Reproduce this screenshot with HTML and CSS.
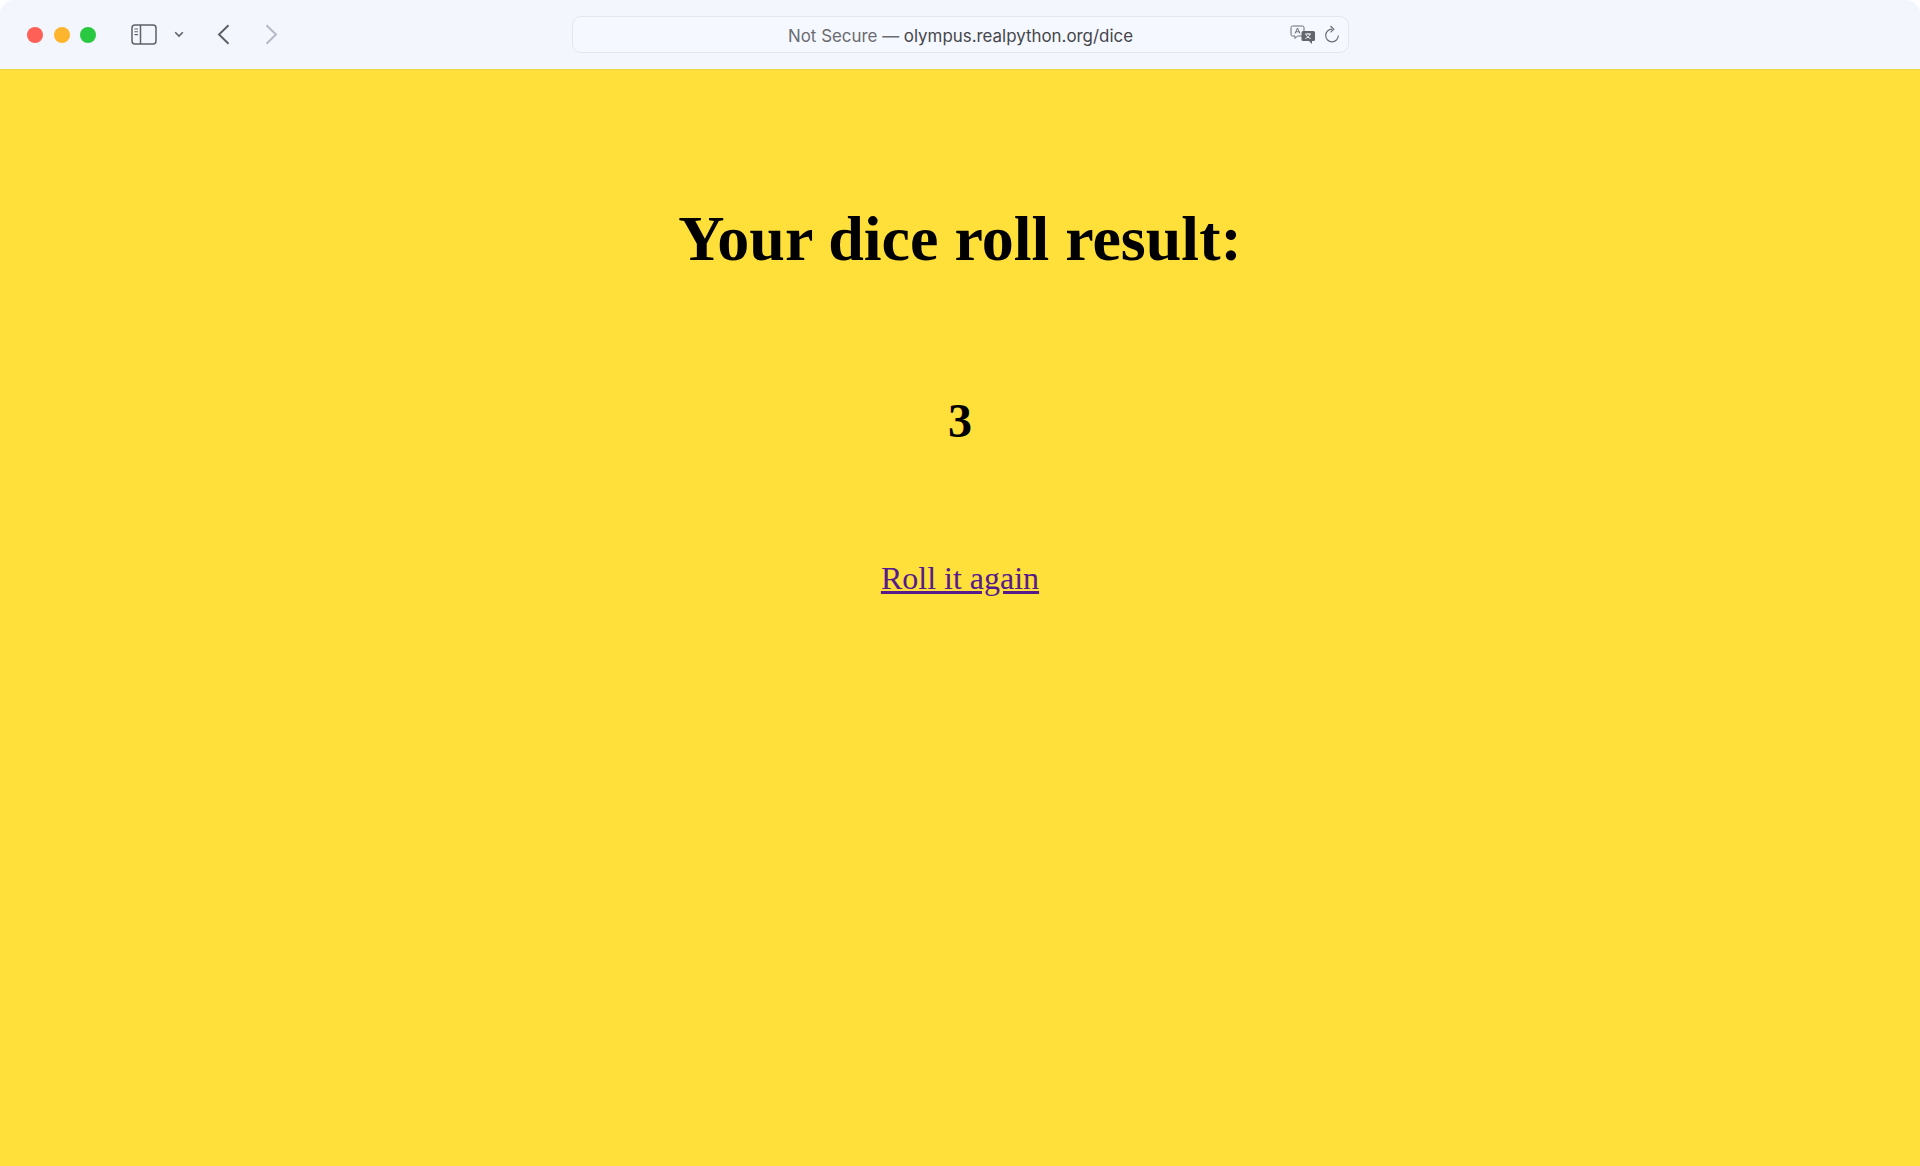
FILE: index.html
```html
<!DOCTYPE html>
<html lang="en">
<head>
<meta charset="utf-8">
<title>Dice roll</title>
<link rel="stylesheet" href="styles.css">
</head>
<body>
<header class="toolbar">
  <div class="lights">
    <span class="light red"></span>
    <span class="light amber"></span>
    <span class="light green"></span>
  </div>
  <svg class="sidebar-icon" width="26" height="21" viewBox="0 0 26 21" fill="none" stroke="#5f6269">
    <rect x="1" y="1" width="24" height="19" rx="3" stroke-width="1.5"/>
    <path d="M9.5 1v19" stroke-width="1.5"/>
    <path d="M3.5 5h3.5M3.5 7.8h3.5M3.5 10.6h3.5" stroke-width="1.1"/>
  </svg>
  <svg class="chevron" width="10" height="7" viewBox="0 0 10 7" fill="none" stroke="#5f6269" stroke-width="1.6">
    <path d="M1.2 1.2 5 5l3.8-3.8"/>
  </svg>
  <svg class="back" width="13" height="21" viewBox="0 0 13 21" fill="none" stroke="#5a5d64" stroke-width="1.9">
    <path d="M11.5 1.2 2 10.5l9.5 9.3"/>
  </svg>
  <svg class="forward" width="13" height="21" viewBox="0 0 13 21" fill="none" stroke="#b4b8c4" stroke-width="1.9">
    <path d="M1.5 1.2 11 10.5l-9.5 9.3"/>
  </svg>
  <div class="address">
    <span class="url"><span class="insecure">Not Secure — </span>olympus.realpython.org/dice</span>
    <svg class="translate" width="26" height="20" viewBox="0 0 26 20">
      <path d="M2.5 1h10a1.5 1.5 0 0 1 1.5 1.500v7a1.500 1.500 0 0 1-1.500 1.500H7.500l-2.500 2.500v-2.500H2.500A1.500 1.500 0 0 1 1 9.500v-7A1.500 1.500 0 0 1 2.500 1z" fill="#f4f7fd" stroke="#6a6d74" stroke-width="1"/>
      <path d="M5 8.500 7.500 3l2.500 5.500M6 6.800h3" fill="none" stroke="#6a6d74" stroke-width="1"/>
      <path d="M13 6h10.500A1.500 1.500 0 0 1 25 7.500v7a1.500 1.500 0 0 1-1.500 1.500H22v3l-3-3h-6a1.500 1.500 0 0 1-1.500-1.500v-7A1.500 1.500 0 0 1 13 6z" fill="#63666d"/>
      <path d="M15 9h6M18 8v1.200M20 9c-.5 2-2.500 3.700-4.500 4.500M16 9.800c.7 1.700 2.500 3 4.700 3.700" fill="none" stroke="#f4f7fd" stroke-width="1"/>
    </svg>
    <svg class="reload" width="16" height="19" viewBox="0 0 16 19" fill="none" stroke="#6a6d74" stroke-width="1.2">
      <path d="M8 4.200a6.300 6.300 0 1 0 6.300 6.300"/>
      <path d="M6.500 1 9.800 4.200 6.500 7.400"/>
    </svg>
  </div>
</header>
<main class="page">
  <h1 class="title">Your dice roll result:</h1>
  <h2 class="result">3</h2>
  <p class="again"><a class="again-link" href="#">Roll it again</a></p>
</main>
</body>
</html>
```
FILE: styles.css
```css
html, body {
  margin: 0;
  height: 100%;
  background: #ffffff;
}
body {
  display: flex;
  flex-direction: column;
  height: 1166px;
  overflow: hidden;
}
.toolbar {
  height: 69px;
  flex: none;
  display: flex;
  align-items: center;
  background: #f3f6fc;
  border-radius: 14px 14px 0 0;
  padding-left: 27px;
  box-sizing: border-box;
}
.lights {
  display: flex;
  gap: 10.500px;
}
.light {
  width: 16px;
  height: 16px;
  border-radius: 50%;
}
.red { background: #fe5f57; }
.amber { background: #feb52e; }
.green { background: #28c840; }
.sidebar-icon { margin-left: 35px; }
.chevron { margin-left: 16.500px; }
.back { margin-left: 33.500px; }
.forward { margin-left: 34.500px; }
.address {
  width: 777px;
  height: 37px;
  margin-left: 294px;
  box-sizing: border-box;
  border: 1px solid #e3e6ee;
  border-radius: 9px;
  background: #f5f8fe;
  display: flex;
  align-items: center;
  position: relative;
  font-family: Inter, "Liberation Sans", sans-serif;
  font-size: 16.900px;
  color: #45464b;
}
.url {
  flex: 1;
  text-align: center;
  padding: 2px 0 0 1px;
}
.insecure { color: #6a6c72; }
.translate { position: absolute; right: 32px; top: 8px; }
.reload { position: absolute; right: 8px; top: 8px; }
.page {
  flex: 1;
  background: #ffdf3a;
  border-top: 1px solid #f0d440;
  text-align: center;
  font-family: "Liberation Serif", serif;
  color: #000000;
  display: flow-root;
}
.title {
  font-size: 64px;
  line-height: 74px;
  margin: 132px 0 0;
}
.result {
  font-size: 48px;
  line-height: 55px;
  margin: 117px 0 0;
}
.again {
  font-size: 32px;
  line-height: 37px;
  margin: 112px 0 0;
}
.again-link { color: #551a8b; }
```
